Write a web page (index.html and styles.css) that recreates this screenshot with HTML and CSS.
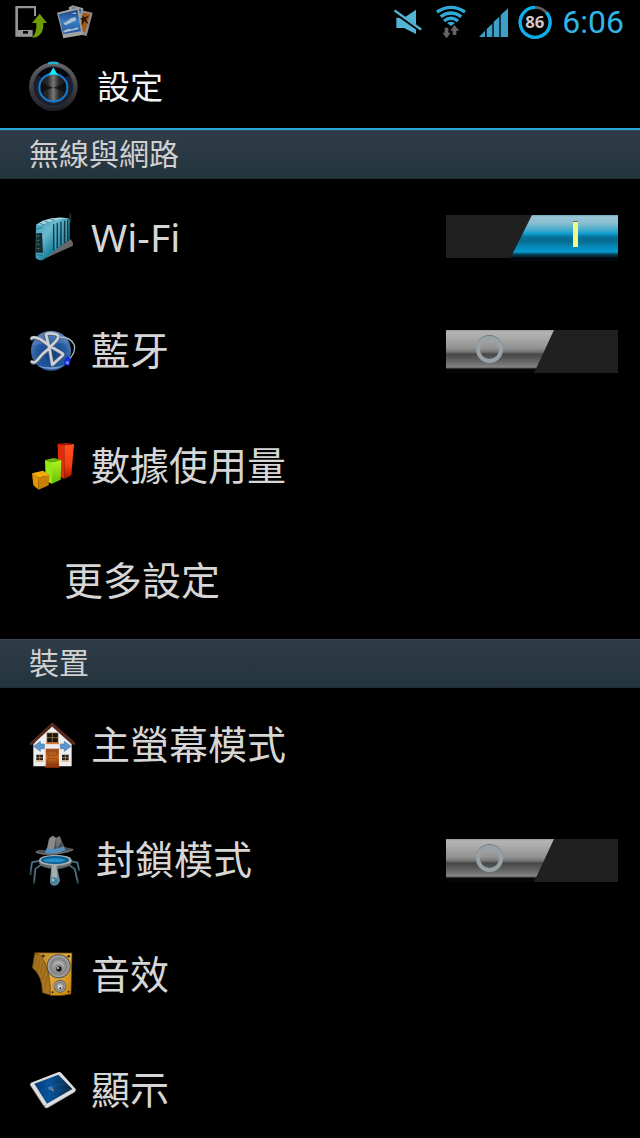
FILE: index.html
```html
<!DOCTYPE html>
<html lang="zh-Hant">
<head>
<meta charset="utf-8">
<meta name="viewport" content="width=device-width, initial-scale=1">
<title>設定</title>
<link rel="stylesheet" href="styles.css">
</head>
<body>
<div class="screen">
  <div class="status-bar">
    <svg class="notifications" viewBox="42 12 240 108" aria-hidden="true">
      <defs>
        <linearGradient id="photo" x1="0" y1="0" x2="0" y2="1"><stop offset="0" stop-color="#174386"/><stop offset=".5" stop-color="#397dc1"/><stop offset="1" stop-color="#1f559a"/></linearGradient>
      </defs>
      <path d="M46 18H108V48H102V25H54V91H92L97 110H46Z" fill="#969696"/>
      <path d="M54 90H98V109H54Z" fill="#969696"/><path d="M69 93H84V101H69Z" fill="#050505"/>
      <path d="M119 41L141 69H130Q132 100 110 111Q102 114 96 112Q111 99 109 69H96Z" fill="#709b08"/>
      <path d="M226 27L278 38L260 108L224 100Z" fill="#8c8c8c"/>
      <path d="M235 35L271 42L255 97L230 88Z" fill="#a45a16"/>
      <path d="M242 40l11 12 14-5-9 11 8 15-13-9-13 22 7-26-14-4 13-4z" fill="#2c1706"/>
      <path d="M206 22L218 16L250 25L246 55L210 50Z" fill="#999"/>
      <path d="M218 22L243 28V38L216 31Z" fill="#315d87"/>
      <path d="M171 38L236 22L250 104L190 115Z" fill="#a2a2a2"/>
      <path d="M176 43L232 29L243 94L189 102Z" fill="url(#photo)"/>
      <path d="M190 70Q203 64 213 55L225 51L230 60L213 68L196 76ZM214 41L226 37L229 42ZM190 93L205 86L214 88L233 82L236 87L190 98Z" fill="#a9c0d4"/>
    </svg>
    <div class="indicators">
      <svg class="indicator narrow" viewBox="42 12 90 108" aria-hidden="true">
        <path d="M49 53H72L108 29V102L72 84H49Z" fill="#53b4d4"/>
        <path d="M45 37L122 91" stroke="#000" stroke-width="12"/>
        <path d="M46 33L121 87" stroke="#53b4d4" stroke-width="7" stroke-linecap="round"/>
      </svg>
      <svg class="indicator" viewBox="162 12 102 108" aria-hidden="true">
        <g fill="none" stroke="#32a8d8" stroke-width="10"><path d="M171 36Q213 8 255 36"/><path d="M182 50Q213 28 244 50"/><path d="M192 63Q213 47 234 63"/></g>
        <path d="M201 69Q213 61 225 69L213 78Z" fill="#32a8d8"/>
        <path d="M194 83H205V98H212L200 115L187 98H194ZM218 105V92H211L223 75L238 92H229V105Z" fill="#656565"/>
      </svg>
      <svg class="indicator narrow" viewBox="294 12 90 108" aria-hidden="true">
        <path d="M297 111L315 92V111ZM320 87L337 71V111H320ZM341 65L358 50V111H341ZM362 45L384 25V111H362Z" fill="#3b9fc8"/>
      </svg>
      <svg class="indicator" viewBox="412 12 102 108" role="img" aria-label="86%">
        <circle cx="463" cy="67" r="45" fill="none" stroke="#606060" stroke-width="8"/>
        <path d="M463 22A45 45 0 1 0 497 37" fill="none" stroke="#08b1ee" stroke-width="10"/>
        <text class="battery-level" x="462" y="83" text-anchor="middle">86</text>
      </svg>
      <time class="clock">6:06</time>
    </div>
  </div>

  <header class="title-bar">
    <svg class="title-icon" viewBox="84 183 153 153" aria-hidden="true">
      <defs>
        <linearGradient id="rim" x1="0" y1="0" x2="0" y2="1"><stop offset="0" stop-color="#686868"/><stop offset=".5" stop-color="#414144"/><stop offset="1" stop-color="#1d1e23"/></linearGradient>
        <linearGradient id="knob" x1="0" y1="0" x2="1" y2="0"><stop offset="0" stop-color="#111"/><stop offset=".3" stop-color="#292929"/><stop offset=".5" stop-color="#777"/><stop offset=".7" stop-color="#292929"/><stop offset="1" stop-color="#111"/></linearGradient>
      </defs>
      <circle cx="160" cy="260" r="73" fill="url(#rim)"/>
      <circle cx="160" cy="260" r="60" fill="#1c1f2d" stroke="#303543" stroke-width="3"/>
      <path d="M113 226A58 58 0 0 1 207 226L190 235H130Z" fill="#05070e"/>
      <circle cx="160" cy="263" r="42" fill="url(#knob)" stroke="#147dd2" stroke-width="6"/>
      <path d="M160 263L124 248V276ZM160 263L196 248V276Z" fill="#080808" opacity=".65"/>
      <path d="M160 202L174 226Q160 221 146 226Z" fill="#18e9f5"/>
      <path d="M145 190Q160 186 175 190" fill="none" stroke="#24b4e0" stroke-width="7"/>
    </svg>
    <h1 class="title">設定</h1>
  </header>

  <main>
    <section>
      <h2 class="section-title">無線與網路</h2>
      <ul class="list">
        <li class="row">
          <a class="row-link" href="#wifi" id="wifi-label">
            <svg class="icon" viewBox="27 38 144 144" aria-hidden="true">
              <defs><linearGradient id="router" x1="0" y1="0" x2="1" y2="1"><stop offset="0" stop-color="#3a9bb9"/><stop offset=".35" stop-color="#6bbacd"/><stop offset=".6" stop-color="#2188a4"/><stop offset="1" stop-color="#085c78"/></linearGradient></defs>
              <path d="M148 40H154V66H148Z" fill="#282828"/>
              <path d="M152 116L159 128V136L67 178L77 168Z" fill="#686868"/>
              <path d="M48 73L68 61Q106 47 145 54L149 60V117L103 153L69 178Q58 183 47 173Z" fill="url(#router)"/>
              <path d="M49 73L69 61Q106 48 144 54Q105 56 65 74Z" fill="#a4d7de"/>
              <path d="M58 69L72 73M73 62L86 67M92 57L104 60" stroke="#215568" stroke-width="2"/>
              <path d="M101 72V150M112 68V143M123 64V135M134 61V128M143 58V121" stroke="#12384a" stroke-width="4"/>
              <path d="M106 70V146M117 66V139M128 62V132M139 60V124" stroke="#69adbe" stroke-width="2"/>
              <path d="M49 99L66 98L69 157H48Z" fill="#172b35"/>
              <path d="M52 107H58M52 120H58M52 132H58M52 145H58" stroke="#437d4f" stroke-width="4"/>
              <path d="M47 162L68 166M49 86L67 82" stroke="#0b637b" stroke-width="2"/>
            </svg>
            <span class="label label-latin">Wi-Fi</span>
          </a>
          <input class="switch" type="checkbox" role="switch" aria-labelledby="wifi-label" checked>
        </li>
        <li class="row">
          <a class="row-link" href="#bluetooth" id="bluetooth-label">
            <svg class="icon" viewBox="27 39 144 144" aria-hidden="true">
              <defs><radialGradient id="orb" cx=".5" cy=".6" r=".6"><stop offset="0" stop-color="#123c7c"/><stop offset=".6" stop-color="#2159a0"/><stop offset="1" stop-color="#5f7fb0"/></radialGradient></defs>
              <circle cx="93" cy="107" r="60" fill="url(#orb)"/>
              <path d="M38 92Q90 79 144 86Q129 45 89 49Q54 54 38 92Z" fill="#719bcb" opacity=".3"/>
              <path d="M52 152Q93 174 137 150Q97 162 52 152Z" fill="#a8b7df" opacity=".7"/>
              <g fill="none" stroke-linecap="round" stroke-linejoin="round">
                <path d="M35 71Q38 64 62 74L90 94L128 116Q131 119 127 123L97 150L89 104L78 60Q79 56 90 56Q108 56 115 63Q116 71 107 80L85 103Q65 118 52 136Q43 147 36 141" stroke="#4d5d78" stroke-width="12"/>
                <path d="M35 70Q38 63 62 73L90 93L127 115Q131 118 127 122L97 149L89 103L78 59Q79 55 90 55Q108 55 115 62Q116 70 107 79L85 102Q65 117 52 135Q43 146 36 140" stroke="#cdd1d5" stroke-width="8"/>
                <path d="M122 66Q151 66 163 90Q168 109 149 132" stroke="#aab4c8" stroke-width="4"/>
              </g>
              <path d="M135 130L144 124L153 133L147 152L132 149Z" fill="#152bdc"/><circle cx="142" cy="143" r="5" fill="#7688ff"/>
            </svg>
            <span class="label">藍牙</span>
          </a>
          <input class="switch" type="checkbox" role="switch" aria-labelledby="bluetooth-label">
        </li>
        <li class="row">
          <a class="row-link" href="#data">
            <svg class="icon" viewBox="27 39 144 144" aria-hidden="true">
              <defs>
                <linearGradient id="red" x1="0" y1="0" x2="0" y2="1"><stop offset="0" stop-color="#ff5423"/><stop offset=".6" stop-color="#f83b10"/><stop offset="1" stop-color="#a91404"/></linearGradient>
                <linearGradient id="green" x1="0" y1="0" x2="0" y2="1"><stop offset="0" stop-color="#b0f622"/><stop offset="1" stop-color="#67bd05"/></linearGradient>
              </defs>
              <path d="M113 41L133 46V147L115 137Z" fill="#e02b0b"/><path d="M133 46L162 42L154 136L133 147Z" fill="url(#red)"/><path d="M113 41L140 39L162 42L133 46Z" fill="#b91609"/>
              <path d="M75 90L96 97V161L77 153Z" fill="#93e816"/><path d="M96 97L124 90L122 149L96 161Z" fill="url(#green)"/><path d="M75 90L101 84L124 90L96 97Z" fill="#69b507"/>
              <path d="M36 130L54 144L56 179L40 166Z" fill="#e49305"/><path d="M54 144L88 134L86 166L56 179Z" fill="#c98005"/><path d="M36 130L69 122L88 134L54 144Z" fill="#f4aa0c"/>
            </svg>
            <span class="label">數據使用量</span>
          </a>
        </li>
        <li class="row row-indented">
          <a class="row-link" href="#more"><span class="label">更多設定</span></a>
        </li>
      </ul>
    </section>

    <section>
      <h2 class="section-title">裝置</h2>
      <ul class="list">
        <li class="row">
          <a class="row-link" href="#home">
            <svg class="icon" viewBox="27 278 144 144" aria-hidden="true">
              <defs><linearGradient id="door" x1="0" y1="0" x2="0" y2="1"><stop offset="0" stop-color="#9e4c16"/><stop offset=".5" stop-color="#cb6b22"/><stop offset="1" stop-color="#85330b"/></linearGradient></defs>
              <path d="M40 338L97 289L155 338V411H40Z" fill="#ededed"/>
              <path d="M97 279L165 339V348L154 344L97 292L41 344L30 348V340Z" fill="#572820"/>
              <path d="M97 293L45 340" stroke="#fff" stroke-width="2"/>
              <path d="M81 311H114V340H81Z" fill="#161515" stroke="#80522e" stroke-width="2"/><path d="M97 311V340M81 325H114" stroke="#c08a35" stroke-width="2"/><path d="M78 342H117" stroke="#db7d36" stroke-width="5"/>
              <path d="M77 358H117V412H77Z" fill="url(#door)"/><path d="M84 365H110V379H84ZM84 387H110V404H84Z" fill="none" stroke="#8b3d12" stroke-width="2"/><path d="M75 413H119" stroke="#b53812" stroke-width="4"/>
              <path d="M49 376H69V393H49ZM126 376H146V393H126Z" fill="#241e1b"/><path d="M59 376V393M49 385H69M136 376V393M126 385H146" stroke="#d59a56" stroke-width="2"/><path d="M47 396H71M124 396H148" stroke="#e9b173" stroke-width="3"/>
              <path d="M41 351L61 336V344H73V358H61V366ZM153 351L133 336V344H121V358H133V366Z" fill="#5d94c9" stroke="#437ab4" stroke-width="2"/>
            </svg>
            <span class="label">主螢幕模式</span>
          </a>
        </li>
        <li class="row">
          <a class="row-link" href="#lockdown" id="lockdown-label">
            <svg class="icon icon-wide" viewBox="27 44 159 162" aria-hidden="true">
              <g fill="none" stroke-linejoin="round"><path d="M62 125L36 129L31 167M66 134L45 149L42 193M150 125L172 129L178 155M145 134L165 149L174 193" stroke="#2b4a5a" stroke-width="6"/><path d="M61 123L37 128L32 153M65 135L47 149L43 184M151 126L172 131L177 149M145 137L164 151L172 184" stroke="#6f9dad" stroke-width="2"/></g>
              <ellipse cx="106" cy="129" rx="49" ry="20" fill="#62696b"/><ellipse cx="106" cy="123" rx="49" ry="17" fill="#a4aaac"/><ellipse cx="105" cy="122" rx="42" ry="12" fill="#075d91"/><ellipse cx="103" cy="123" rx="33" ry="6" fill="#258fc9"/>
              <path d="M94 139H111L120 184Q114 200 101 199Q88 196 90 181Z" fill="#5f8799"/><path d="M96 137H109L112 178H94Z" fill="#a8acac"/><circle cx="102" cy="184" r="10" fill="#4a819d"/><circle cx="99" cy="182" r="4" fill="#a7c6ca"/>
              <path d="M47 95Q59 89 79 93L87 58L98 49L108 56L119 50L134 83L161 89Q157 98 135 101Q87 114 47 101Z" fill="#4c4e50"/>
              <path d="M87 58L98 49L108 56L102 88L81 94Z" fill="#888a8b"/><path d="M108 56L119 50L124 66L110 89Z" fill="#747678"/>
              <path d="M80 87Q107 94 132 81L136 93Q106 108 75 100Z" fill="#528fc1"/><path d="M48 98Q80 111 133 99L160 90" fill="none" stroke="#777b7e" stroke-width="3"/>
            </svg>
            <span class="label">封鎖模式</span>
          </a>
          <input class="switch" type="checkbox" role="switch" aria-labelledby="lockdown-label">
        </li>
        <li class="row">
          <a class="row-link" href="#sound">
            <svg class="icon" viewBox="27 38 144 144" aria-hidden="true">
              <defs><linearGradient id="wood" x1="0" y1="0" x2="1" y2="1"><stop offset="0" stop-color="#bc8629"/><stop offset=".5" stop-color="#e0ac3e"/><stop offset="1" stop-color="#c68205"/></linearGradient><radialGradient id="cone"><stop offset="0" stop-color="#444"/><stop offset=".3" stop-color="#bbb"/><stop offset=".7" stop-color="#808080"/><stop offset="1" stop-color="#aaa"/></radialGradient></defs>
              <path d="M44 41L64 48Q94 97 92 168L67 160Q67 109 37 85Z" fill="#a87420" stroke="#553204" stroke-width="2"/>
              <path d="M51 54L43 83M60 59L51 96M69 72L59 110M77 87L67 121M83 104L75 142" stroke="#83551a" stroke-width="2"/>
              <path d="M44 40L156 41L153 164Q125 171 91 168Q93 96 64 50Z" fill="url(#wood)" stroke="#6d430b" stroke-width="2"/>
              <circle cx="116" cy="81" r="36" fill="#525252"/><circle cx="116" cy="81" r="33" fill="url(#cone)"/><circle cx="116" cy="88" r="15" fill="#909090"/><circle cx="117" cy="89" r="8" fill="#191919"/><circle cx="114" cy="86" r="3" fill="#ddd"/>
              <circle cx="120" cy="141" r="19" fill="#555"/><circle cx="120" cy="141" r="17" fill="url(#cone)"/><circle cx="120" cy="144" r="6" fill="#ddd"/><circle cx="121" cy="146" r="3" fill="#333"/>
              <g fill="#342504"><circle cx="70" cy="50" r="4"/><circle cx="146" cy="51" r="4"/><circle cx="98" cy="159" r="3"/><circle cx="146" cy="157" r="3"/></g>
            </svg>
            <span class="label">音效</span>
          </a>
        </li>
        <li class="row">
          <a class="row-link" href="#display">
            <svg class="icon" viewBox="27 51 144 144" aria-hidden="true">
              <defs><linearGradient id="display" x1="0" y1="0" x2="1" y2="0"><stop offset="0" stop-color="#0a3d78"/><stop offset=".4" stop-color="#07549d"/><stop offset=".75" stop-color="#0b3b66"/><stop offset="1" stop-color="#09223b"/></linearGradient></defs>
              <path d="M33 98L116 66Q121 65 124 69L167 117Q169 122 164 126L83 173Q77 176 73 170L31 106Q29 101 33 98Z" fill="#dedede"/>
              <path d="M31 106L73 170Q77 176 83 173L164 126" fill="none" stroke="#8d8d8d" stroke-width="2"/>
              <path d="M43 101L115 74L157 117L81 161Z" fill="url(#display)"/>
              <path d="M58 132Q83 104 141 101M68 144Q101 118 156 117M79 89Q74 107 103 126" fill="none" stroke="#2474aa" stroke-width="2" opacity=".4"/>
              <path d="M84 112l10-3 6 4-4 8-9-1z" fill="#447cb1"/><circle cx="98" cy="120" r="3" fill="#ba8b73"/><circle cx="75" cy="167" r="2" fill="#39628d"/>
            </svg>
            <span class="label">顯示</span>
          </a>
        </li>
      </ul>
    </section>
  </main>
</div>
</body>
</html>
```

FILE: styles.css
```css
*,
*::before,
*::after {
  box-sizing: border-box;
}

body {
  margin: 0;
  background: #000;
  color: #d6d6d6;
  font-family: Roboto, "Noto Sans CJK TC", sans-serif;
}

.screen {
  height: 100vh;
  overflow: hidden;
}

.status-bar {
  display: flex;
  align-items: center;
  justify-content: space-between;
  height: 44px;
  padding: 0 16px 0 14px;
}

.notifications {
  width: 80px;
  height: 36px;
}

.indicators {
  display: flex;
  align-items: center;
  gap: 10px;
}

.indicator {
  width: 34px;
  height: 36px;
}

.indicator.narrow {
  width: 30px;
}

.battery-level {
  fill: #d0c8c8;
  font: bold 50px "Open Sans", sans-serif;
}

.clock {
  color: #33b5e5;
  font-size: 32px;
  line-height: 44px;
}

.title-bar {
  display: flex;
  align-items: center;
  gap: 18px;
  height: 86px;
  padding: 0 28px;
  border-bottom: 2px solid #25a9dc;
}

.title-icon {
  width: 51px;
  height: 51px;
}

.title {
  margin: 0;
  padding-top: 4px;
  color: #f3f3f3;
  font-size: 33px;
  font-weight: 400;
  line-height: 48px;
}

.section-title {
  margin: 0;
  padding: 1px 29px 0;
  border-top: 1px solid #3b4854;
  border-bottom: 1px solid #202c32;
  background: linear-gradient(#2e3c48, #24343c);
  color: #d0d0d0;
  font-size: 30px;
  font-weight: 400;
  line-height: 46px;
}

.list {
  margin: 0;
  padding: 0;
  list-style: none;
}

.row {
  display: flex;
  align-items: center;
  height: 115px;
  padding: 0 22px 0 29px;
}

.row-indented {
  padding-left: 64px;
}

.row-link {
  display: flex;
  flex: 1;
  align-items: center;
  gap: 14px;
  color: inherit;
  text-decoration: none;
}

.icon {
  width: 48px;
  height: 48px;
}

.icon-wide {
  width: 53px;
  height: 54px;
}

.label {
  font-size: 39px;
  line-height: 56px;
}

.label-latin {
  font-family: "Noto Sans", sans-serif;
}

.switch {
  position: relative;
  width: 172px;
  height: 43px;
  margin: 0;
  appearance: none;
  background: #202020;
}

.switch::before {
  content: "";
  position: absolute;
  top: 0;
  left: 0;
  width: 108px;
  height: 43px;
  background: linear-gradient(#999 0, #b5b5b5 2px, #a5a5a5 10px, #929292 18px, #737373 22px, #484848 24px, #555 28px, #727272 34px, #858585 37px, #5b5b5b 38px, #060606 39px, #060606 100%);
  clip-path: polygon(0 0, 100% 0, 88px 100%, 0 100%);
}

.switch::after {
  content: "";
  position: absolute;
  top: 6px;
  left: 30px;
  width: 27px;
  height: 27px;
  border: 4px solid #98a2a7;
  border-radius: 50%;
  box-shadow: 0 -1px 0 #70777a;
}

.switch:checked::before {
  left: 65px;
  width: 107px;
  height: 46px;
  background: linear-gradient(#6ea9bd 0, #9bc5d4 2px, #88bfd0 8px, #39a8ce 16px, #099bcd 19px, #087197 22px, #066b90 26px, #058abb 32px, #0798cc 37px, #047ba7 38px, #05445c 39px, #03202c 42px, #000 43px, #041116 45px, #000 100%);
  clip-path: polygon(21px 0, 100% 0, 100% 100%, 0 100%, 0 42px);
}

.switch:checked::after {
  top: 7px;
  left: 127px;
  width: 5px;
  height: 25px;
  border: 0;
  border-radius: 0;
  background: #effa86;
  box-shadow: 0 -1px 0 #4b7785;
}
```
